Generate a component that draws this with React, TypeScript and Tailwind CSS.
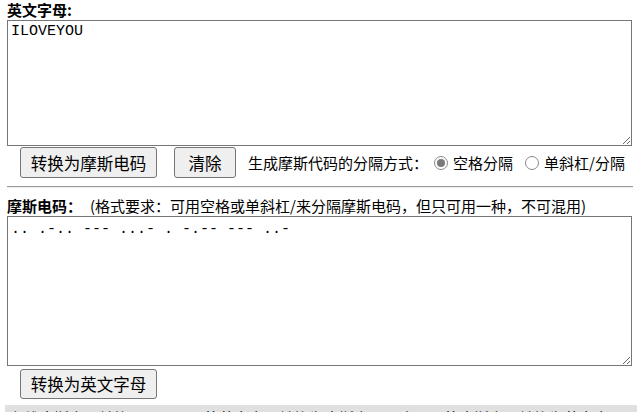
import React from "react";

const cjk = { fontFamily: '"Noto Sans CJK SC", "Noto Sans", sans-serif' };

function Radio({ checked }: { checked?: boolean }) {
  return (
    <span className="inline-flex h-[14px] w-[14px] shrink-0 items-center justify-center rounded-full border border-[#8a8a8a] bg-white">
      {checked ? <span className="block h-[8px] w-[8px] rounded-full bg-[#7a7a7a]" /> : null}
    </span>
  );
}

export default function App() {
  return (
    <div className="w-[637px] overflow-hidden bg-white text-black" style={cjk}>
      <div className="pl-[7px]">
        <div className="h-[20px] text-[15px] font-bold leading-[20px]">英文字母:</div>
        <textarea
          readOnly
          defaultValue="ILOVEYOU"
          className="block h-[126px] w-[625px] resize border border-[#767676] bg-white px-[3px] pt-[2px] text-[15px] leading-[17px] text-black outline-none"
          style={{ fontFamily: '"Liberation Mono", monospace' }}
        />
        <div className="mt-[1px] flex h-[31px] items-center pl-[13px]">
          <button className="h-[31px] w-[137px] rounded-[3px] border border-[#767676] bg-[#efefef] text-[16.5px] leading-[20px] text-black">
            转换为摩斯电码
          </button>
          <button className="ml-[17px] h-[31px] w-[62px] rounded-[3px] border border-[#767676] bg-[#efefef] text-[16.5px] leading-[20px] text-black">
            清除
          </button>
          <span className="ml-[12px] text-[15px] leading-[20px]">生成摩斯代码的分隔方式：</span>
          <span className="ml-[6px] flex items-center">
            <Radio checked />
            <span className="ml-[5px] text-[15px] leading-[20px]">空格分隔</span>
          </span>
          <span className="ml-[12px] flex items-center">
            <Radio />
            <span className="ml-[5px] text-[15px] leading-[20px]">单斜杠/分隔</span>
          </span>
        </div>
        <div className="mt-[8px] w-[626px] border-t border-b border-t-[#9a9a9a] border-b-[#ededed]" />
        <div className="mt-[8px] flex h-[20px] items-center text-[15px] leading-[20px]">
          <span className="font-bold">摩斯电码：</span>
          <span className="ml-[8px]">(格式要求：可用空格或单斜杠/来分隔摩斯电码，但只可用一种，不可混用)</span>
        </div>
        <textarea
          readOnly
          defaultValue=".. .-.. --- ...- . -.-- --- ..-"
          className="block h-[150px] w-[625px] resize border border-[#767676] bg-white px-[3px] pt-[4px] text-[15px] leading-[17px] text-black outline-none"
          style={{ fontFamily: '"Liberation Mono", monospace' }}
        />
        <div className="mt-[3px] pl-[13px]">
          <button className="h-[30px] w-[137px] rounded-[3px] border border-[#767676] bg-[#efefef] text-[16.5px] leading-[20px] text-black">
            转换为英文字母
          </button>
        </div>
      </div>
      <div className="ml-[5px] mt-[6px] h-[24px] bg-[#e0e0e0] pl-[4px] pt-[3px] text-[15px] leading-[20px] whitespace-nowrap">
        在线摩斯电码转换工具，可以将英文字母转换为摩斯电码，也可以将摩斯电码转换为英文字母，方便快捷。
      </div>
    </div>
  );
}
